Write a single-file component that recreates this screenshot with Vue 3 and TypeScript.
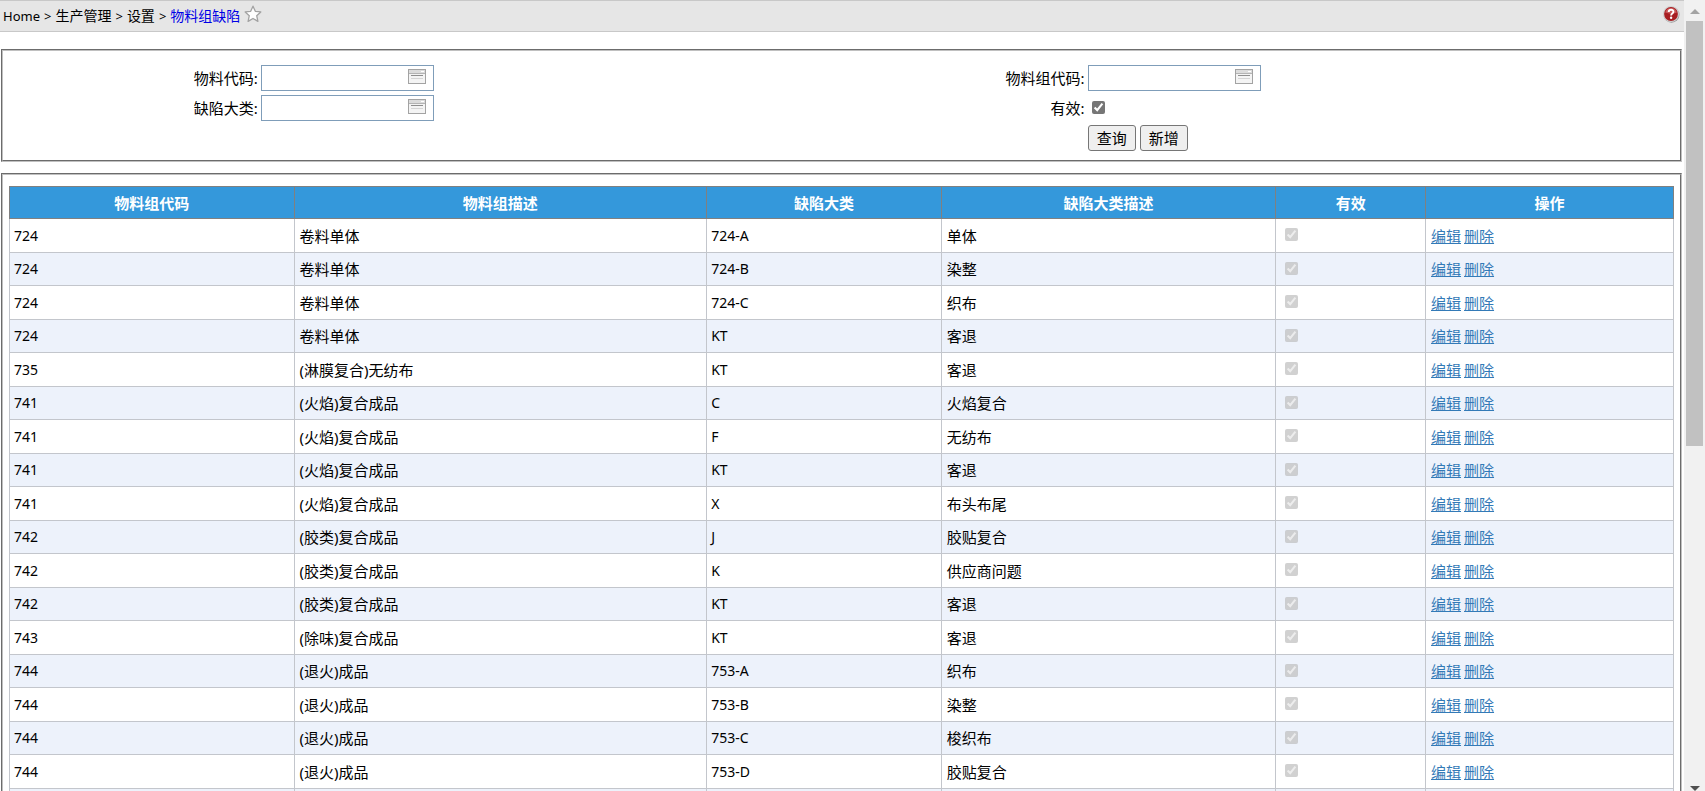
<script setup lang="ts">
import { reactive } from 'vue'

interface DefectRow {
  group: string
  desc: string
  type: string
  typeDesc: string
}

const raw: [string, string, string, string][] = [
  ['724', '卷料单体', '724-A', '单体'],
  ['724', '卷料单体', '724-B', '染整'],
  ['724', '卷料单体', '724-C', '织布'],
  ['724', '卷料单体', 'KT', '客退'],
  ['735', '(淋膜复合)无纺布', 'KT', '客退'],
  ['741', '(火焰)复合成品', 'C', '火焰复合'],
  ['741', '(火焰)复合成品', 'F', '无纺布'],
  ['741', '(火焰)复合成品', 'KT', '客退'],
  ['741', '(火焰)复合成品', 'X', '布头布尾'],
  ['742', '(胶类)复合成品', 'J', '胶贴复合'],
  ['742', '(胶类)复合成品', 'K', '供应商问题'],
  ['742', '(胶类)复合成品', 'KT', '客退'],
  ['743', '(除味)复合成品', 'KT', '客退'],
  ['744', '(退火)成品', '753-A', '织布'],
  ['744', '(退火)成品', '753-B', '染整'],
  ['744', '(退火)成品', '753-C', '梭织布'],
  ['744', '(退火)成品', '753-D', '胶贴复合'],
]

const rows: DefectRow[] = raw.map(([group, desc, type, typeDesc]) => ({ group, desc, type, typeDesc }))
const headers = ['物料组代码', '物料组描述', '缺陷大类', '缺陷大类描述', '有效', '操作']
const crumbs = ['生产管理', '设置']
const fields = [
  { id: 'material', label: '物料代码:' },
  { id: 'group', label: '物料组代码:' },
  { id: 'defect', label: '缺陷大类:' },
]
const query = reactive<Record<string, string | boolean>>({ material: '', group: '', defect: '', valid: true })
</script>

<template>
  <div class="window">
    <main class="content">
      <header class="topbar">
        <nav class="crumbs">
          <a href="#" class="home">Home</a>
          <template v-for="c in crumbs" :key="c">
            <span class="sep">&gt;</span><a href="#">{{ c }}</a>
          </template>
          <span class="sep">&gt;</span><a href="#" class="current">物料组缺陷</a>
        </nav>
        <button class="icon-btn star" type="button" aria-label="收藏">
          <svg width="18" height="18" viewBox="0 0 18 18">
            <path d="M9 1.200l2.300 5.100 5.500.6-4.100 3.800 1.200 5.700L9 13.500l-4.900 2.900 1.200-5.700L1.200 6.900l5.500-.6z" fill="#fff" stroke="#a2a2a2" stroke-width="1.300" stroke-linejoin="round" />
          </svg>
        </button>
        <button class="icon-btn help" type="button" aria-label="帮助">
          <svg width="18" height="18" viewBox="0 0 18 18">
            <circle cx="9.500" cy="9.700" r="8" fill="#999" />
            <circle cx="9" cy="9" r="8" fill="#d2d2d2" />
            <circle cx="9" cy="9" r="6.900" fill="#a81e22" />
            <path d="M3.200 7.500a6 6 0 0 1 11.600 0c-3 1.500-8 1.500-11.600 0z" fill="#c9595a" />
            <path d="M6.700 7c.1-3 4.800-2.900 4.700-.2 0 1.700-2.300 1.700-2.300 3.600" fill="none" stroke="#fff" stroke-width="1.900" />
            <circle cx="9.100" cy="12.800" r="1.200" fill="#fff" />
          </svg>
        </button>
      </header>

      <form class="panel search" @submit.prevent>
        <template v-for="f in fields" :key="f.id">
          <label :for="f.id">{{ f.label }}</label>
          <div class="control">
            <div class="picker">
              <input :id="f.id" v-model="query[f.id]" type="text" />
              <button class="icon-btn" type="button" aria-label="选择">
                <svg width="18" height="15" viewBox="0 0 18 15" shape-rendering="crispEdges">
                  <path d="M.5.5h17v14H.5z" fill="#f4f4f4" stroke="#a3a3a3" />
                  <path d="M1 1h16v3H1z" fill="#dcdcdc" />
                  <path d="M1 4.500h16" stroke="#b4b4b4" />
                  <path d="M3 6.500h12" stroke="#8f8f8f" />
                  <path d="M3 9.500h12" stroke="#d5d5d5" />
                  <path d="M13 2.500h3" stroke="#fff" />
                </svg>
              </button>
            </div>
          </div>
        </template>
        <label for="valid">有效:</label>
        <div class="control"><input id="valid" v-model="query.valid" type="checkbox" /></div>
        <div class="control actions">
          <button type="submit">查询</button>
          <button type="button">新增</button>
        </div>
      </form>

      <section class="panel results">
        <table>
          <colgroup>
            <col class="c1" /><col class="c2" /><col class="c3" /><col class="c4" /><col class="c5" /><col class="c6" />
          </colgroup>
          <thead>
            <tr><th v-for="h in headers" :key="h" scope="col">{{ h }}</th></tr>
          </thead>
          <tbody>
            <tr v-for="(r, i) in rows" :key="i">
              <td class="code">{{ r.group }}</td>
              <td>{{ r.desc }}</td>
              <td class="code">{{ r.type }}</td>
              <td>{{ r.typeDesc }}</td>
              <td><input type="checkbox" checked disabled aria-label="有效" /></td>
              <td><div class="links"><a href="#">编辑</a><a href="#">删除</a></div></td>
            </tr>
            <tr><td v-for="h in headers" :key="h"></td></tr>
          </tbody>
        </table>
      </section>
    </main>

    <div class="scrollbar" aria-hidden="true">
      <svg class="up" width="10" height="5" viewBox="0 0 10 5"><path d="M0 5l5-5 5 5z" fill="#a3a3a3" /></svg>
      <div class="track"><div class="thumb"></div></div>
      <svg class="down" width="10" height="5" viewBox="0 0 10 5"><path d="M0 0l5 5 5-5z" fill="#505050" /></svg>
    </div>
  </div>
</template>

<style>
body {
  margin: 0;
  background: #fff;
}
</style>

<style scoped>
.window {
  display: flex;
  height: 100vh;
  overflow: hidden;
  color: #000;
  font: 15px/20px "Noto Sans", "Noto Sans CJK SC", sans-serif;
}
.content {
  flex: 1;
  min-width: 0;
}
.topbar {
  display: flex;
  align-items: center;
  height: 32px;
  box-sizing: border-box;
  padding: 0 4px 0 3px;
  border: solid #c8c8c8;
  border-width: 1px 0;
  background: #e6e6e6;
}
.crumbs {
  display: flex;
  align-items: center;
  gap: 4px;
  font-size: 14px;
}
.crumbs a {
  color: #000;
  text-decoration: none;
}
.crumbs .home,
.crumbs .sep {
  font-size: 13px;
}
.crumbs a.current {
  color: #0000e6;
}
.icon-btn {
  display: flex;
  padding: 0;
  border: 0;
  background: none;
}
.star {
  margin: 0 0 5px 4px;
}
.help {
  margin: 0 0 5px auto;
}
.panel {
  margin: 0 2px 0 1px;
  border: 2px groove #c0c0c0;
}
.search {
  display: grid;
  grid-template-columns: 15.2% 34.3% 15% 35.5%;
  grid-auto-rows: 26px;
  row-gap: 4px;
  margin-top: 17px;
  padding: 14px 0 9px;
}
.search label {
  text-align: right;
  line-height: 26px;
}
.control {
  display: flex;
  align-items: center;
  padding-left: 3px;
}
.picker {
  display: flex;
  width: 173px;
  height: 26px;
  box-sizing: border-box;
  padding-right: 7px;
  border: 1px solid #7f9db9;
}
.picker input {
  flex: 1;
  min-width: 0;
  padding: 0 4px;
  border: 0;
  outline: 0;
  font: inherit;
}
.picker .icon-btn {
  padding-top: 3px;
}
input[type="checkbox"] {
  width: 13px;
  height: 13px;
  margin: 0 0 2px 4px;
  accent-color: #767676;
}
.actions {
  grid-column: 4;
  gap: 4px;
}
.actions button {
  height: 26px;
  padding: 0 8px;
  border: 1px solid #767676;
  border-radius: 3px;
  background: #efefef;
  color: #000;
  font: inherit;
}
.results {
  margin-top: 11px;
  padding: 11px 6px;
}
table {
  width: 100%;
  table-layout: fixed;
  border-collapse: collapse;
}
.c1 { width: 17.1%; }
.c2 { width: 24.8%; }
.c3 { width: 14.1%; }
.c4 { width: 20.1%; }
.c5 { width: 9%; }
.c6 { width: 14.9%; }
th {
  height: 31px;
  padding: 0;
  border: 1px solid #808080;
  background: #3498db;
  color: #fff;
  font-weight: bold;
}
td {
  box-sizing: border-box;
  height: 34px;
  padding: 0 5px;
  border: 1px solid #c3c6cc;
}
td.code {
  padding-left: 4px;
  font-size: 14px;
}
td input {
  display: block;
}
tbody tr:nth-child(even) {
  background: #edf2fb;
}
tbody tr:nth-child(even) td {
  height: 33px;
}
.links {
  display: flex;
  gap: 3px;
}
.links a {
  color: #337ab7;
}
.scrollbar {
  display: flex;
  flex-direction: column;
  align-items: center;
  width: 21px;
  box-sizing: border-box;
  padding: 0 2px;
  background: #f1f1f1;
}
.up {
  margin: 9px 0 7px;
}
.track {
  flex: 1;
  width: 17px;
}
.thumb {
  height: 55.500%;
  background: #c1c1c1;
}
.down {
  flex: none;
}
</style>
